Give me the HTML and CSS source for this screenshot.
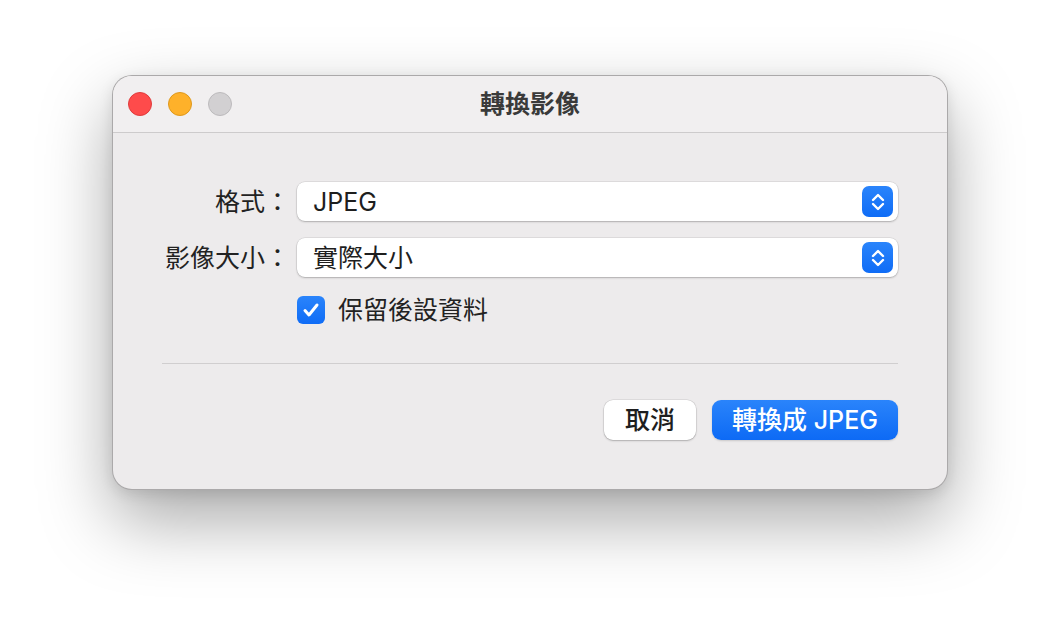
FILE: index.html
```html
<!DOCTYPE html>
<html lang="zh-Hant">
<head>
<meta charset="utf-8">
<title>轉換影像</title>
<link rel="stylesheet" href="styles.css">
</head>
<body>
<div class="window">
  <div class="titlebar">
    <div class="lights">
      <span class="light red"></span>
      <span class="light yellow"></span>
      <span class="light gray"></span>
    </div>
    <div class="title">轉換影像</div>
    <div></div>
  </div>
  <div class="content">
    <div class="form">
      <label class="label">格式：</label>
      <div class="popup">
        <span class="popup-text">JPEG</span>
        <span class="stepper">
          <svg width="14" height="18" viewBox="0 0 14 18"><path d="M2 7 L7 2 L12 7 M2 11 L7 16 L12 11" fill="none" stroke="#fff" stroke-width="2.4" stroke-linecap="round" stroke-linejoin="round"/></svg>
        </span>
      </div>
      <label class="label">影像大小：</label>
      <div class="popup">
        <span class="popup-text">實際大小</span>
        <span class="stepper">
          <svg width="14" height="18" viewBox="0 0 14 18"><path d="M2 7 L7 2 L12 7 M2 11 L7 16 L12 11" fill="none" stroke="#fff" stroke-width="2.4" stroke-linecap="round" stroke-linejoin="round"/></svg>
        </span>
      </div>
      <div></div>
      <div class="check-row">
        <span class="checkbox">
          <svg width="18" height="16" viewBox="0 0 18 16"><path d="M3 8.5 L7 13 L15 3" fill="none" stroke="#fff" stroke-width="3" stroke-linecap="round" stroke-linejoin="round"/></svg>
        </span>
        <span class="check-label">保留後設資料</span>
      </div>
    </div>
    <div class="separator"></div>
    <div class="buttons">
      <button class="btn cancel">取消</button>
      <button class="btn primary">轉換成 JPEG</button>
    </div>
  </div>
</div>
</body>
</html>
```

FILE: styles.css
```css
html, body {
  margin: 0;
}
html {
  background: #ffffff;
}
body {
  min-height: 100vh;
  box-sizing: border-box;
  padding: 75px 0 0 112px;
  font-family: "Inter", "Noto Sans CJK TC", sans-serif;
  font-size: 25px;
  font-weight: 400;
  color: #222222;
}
.window {
  width: 836px;
  box-sizing: border-box;
  border-radius: 20px;
  background: #edebec;
  border: 1px solid rgba(0,0,0,0.28);
  box-shadow: 0 30px 70px rgba(0,0,0,0.34), 0 4px 14px rgba(0,0,0,0.10);
  overflow: hidden;
}
.titlebar {
  height: 57px;
  box-sizing: border-box;
  border-bottom: 1px solid #cdcbcc;
  background: #f1eff0;
  display: grid;
  grid-template-columns: 1fr auto 1fr;
  align-items: center;
}
.lights {
  display: flex;
  gap: 16px;
  padding-left: 15px;
}
.light {
  width: 24px;
  height: 24px;
  border-radius: 50%;
  box-sizing: border-box;
}
.red { background: #fe4b4b; border: 1px solid #df3b3c; }
.yellow { background: #feb12a; border: 1px solid #de981c; }
.gray { background: #d2d0d2; border: 1px solid #bcbabc; }
.title {
  font-weight: 700;
  font-size: 25px;
  line-height: 30px;
  color: #3a3a3a;
}
.content {
  padding: 49px 49px 49px 49px;
}
.form {
  display: grid;
  grid-template-columns: 128px 1fr;
  column-gap: 7px;
  row-gap: 17px;
  align-items: center;
}
.label {
  text-align: right;
  line-height: 30px;
  white-space: nowrap;
}
.popup {
  height: 39px;
  box-sizing: border-box;
  background: #fff;
  border-radius: 8px;
  box-shadow: 0 0 0 0.5px rgba(0,0,0,0.12), 0 1px 2px rgba(0,0,0,0.22);
  display: flex;
  align-items: center;
  justify-content: space-between;
  padding: 0 5px 0 16px;
}
.popup-text {
  line-height: 30px;
  color: #1e1e1e;
}
.stepper {
  width: 31px;
  height: 31px;
  border-radius: 7px;
  background: linear-gradient(#2a84fb, #0f6cf6);
  display: flex;
  align-items: center;
  justify-content: center;
}
.check-row {
  display: flex;
  align-items: center;
  gap: 13px;
  height: 28px;
  margin-top: 2px;
}
.checkbox {
  width: 28px;
  height: 28px;
  border-radius: 6px;
  background: linear-gradient(#2a84fb, #0f6cf6);
  display: flex;
  align-items: center;
  justify-content: center;
}
.check-label {
  line-height: 28px;
}
.separator {
  height: 1px;
  background: #d0cecf;
  margin-top: 39px;
}
.buttons {
  display: flex;
  justify-content: flex-end;
  gap: 16px;
  margin-top: 36px;
}
.btn {
  height: 40px;
  border: none;
  border-radius: 9px;
  font-family: "Inter", "Noto Sans CJK TC", sans-serif;
  font-size: 25px;
  font-weight: 500;
  line-height: 30px;
  padding: 0;
  cursor: default;
}
.cancel {
  width: 92px;
  background: #fff;
  color: #1e1e1e;
  box-shadow: 0 0 0 0.5px rgba(0,0,0,0.12), 0 1px 2px rgba(0,0,0,0.22);
}
.primary {
  width: 186px;
  color: #fff;
  background: linear-gradient(#2a84fb, #0d6af5);
  box-shadow: 0 1px 2px rgba(0,0,0,0.15);
}
```
